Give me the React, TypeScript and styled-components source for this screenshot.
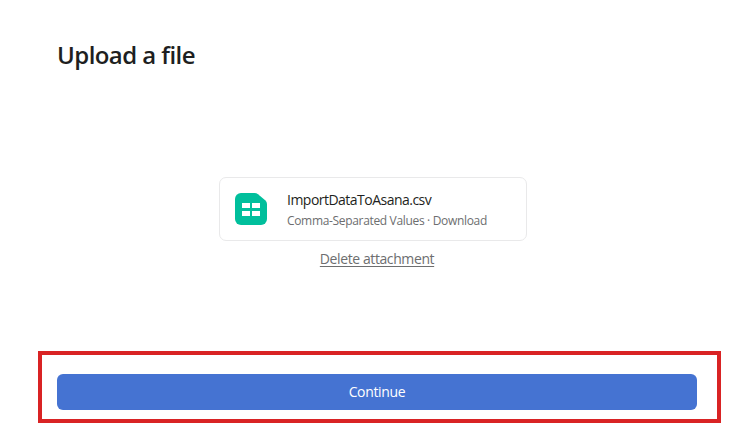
import React from "react";
import styled, { createGlobalStyle } from "styled-components";

const GlobalStyle = createGlobalStyle`
  * { box-sizing: border-box; }
  body { margin: 0; background: #fff; font-family: "Open Sans", "Noto Sans", sans-serif; color: #1e1f21; }
`;

const Page = styled.main`
  height: 430px;
  display: flex;
  flex-direction: column;
  overflow: hidden;
`;

const Title = styled.h1`
  margin: 38px 0 0 57px;
  font-size: 24px;
  line-height: 34px;
  font-weight: 600;
  letter-spacing: -0.56px;
  white-space: nowrap;
`;

const FileArea = styled.section`
  margin-top: 105px;
  width: 308px;
  margin-left: 219px;
  display: flex;
  flex-direction: column;
`;

const FileCard = styled.div`
  height: 64px;
  border: 1px solid #e9e9ea;
  border-radius: 7px;
  display: flex;
  align-items: center;
  padding-left: 15px;
  gap: 20px;
`;

const FileIcon = styled.svg`
  width: 32px;
  height: 32px;
  flex: none;
`;

const FileText = styled.div`
  display: flex;
  flex-direction: column;
  padding-top: 3px;
  white-space: nowrap;
`;

const FileName = styled.span`
  font-size: 14px;
  line-height: 20px;
  letter-spacing: -0.52px;
`;

const FileMeta = styled.span`
  font-size: 12px;
  line-height: 21px;
  color: #6d6e6f;
  letter-spacing: -0.33px;
`;

const DeleteLink = styled.a`
  align-self: center;
  margin-top: 8px;
  margin-left: 8px;
  font-size: 14px;
  line-height: 20px;
  letter-spacing: -0.4px;
  color: #6d6e6f;
  text-decoration: underline;
  text-decoration-thickness: 1px;
  text-underline-offset: 2px;
  white-space: nowrap;
`;

const Highlight = styled.div`
  margin: auto 23px 7px 38px;
  height: 72px;
  border: 4px solid #d92324;
  padding: 19px 20px 0 15px;
`;

const ContinueButton = styled.button`
  display: block;
  width: 100%;
  height: 36px;
  padding: 0;
  border: 0;
  border-radius: 6px;
  background: #4573d2;
  color: #fff;
  font: 400 14px/36px "Open Sans", "Noto Sans", sans-serif;
  letter-spacing: -0.33px;
`;

export default function App() {
  return (
    <>
      <GlobalStyle />
      <Page>
        <Title>Upload a file</Title>
        <FileArea>
          <FileCard>
            <FileIcon viewBox="0 0 32 32" aria-hidden="true">
              <path fill="#00bf9c" d="M6 0h13.500q2 0 3.500 1.200l7.200 6Q32 8.800 32 11V26a6 6 0 0 1-6 6H6a6 6 0 0 1-6-6V6a6 6 0 0 1 6-6Z" />
              <path fill="#fff" d="M7 10h8v5H7Zm10 0h8v5h-8ZM7 18h8v5H7Zm10 0h8v5h-8Z" />
            </FileIcon>
            <FileText>
              <FileName>ImportDataToAsana.csv</FileName>
              <FileMeta>Comma-Separated Values · Download</FileMeta>
            </FileText>
          </FileCard>
          <DeleteLink>Delete attachment</DeleteLink>
        </FileArea>
        <Highlight>
          <ContinueButton>Continue</ContinueButton>
        </Highlight>
      </Page>
    </>
  );
}
